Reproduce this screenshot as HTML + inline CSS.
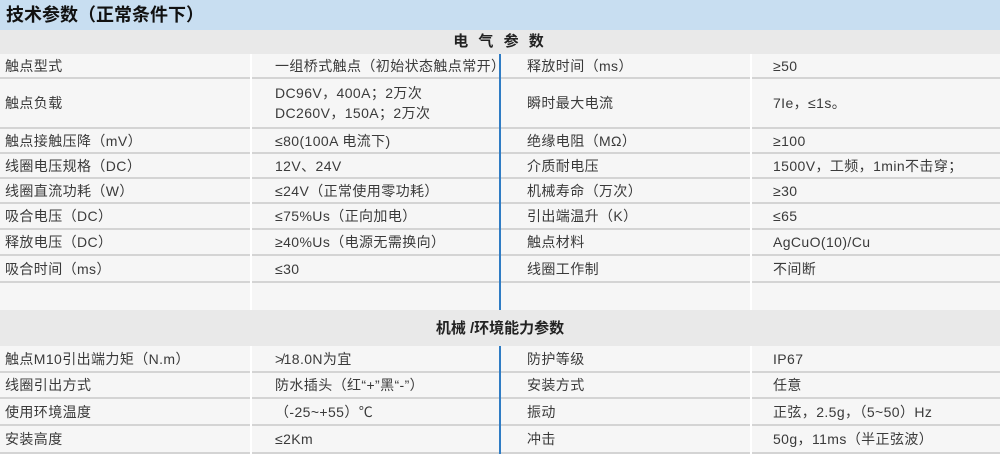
<!DOCTYPE html>
<html><head><meta charset="utf-8"><style>
*{margin:0;padding:0;box-sizing:border-box}
body{width:1000px;height:454px;background:#f6f6f6;font-family:"Liberation Sans","Noto Sans CJK SC",sans-serif;color:#3a3a3a;font-size:14px;position:relative;overflow:hidden}
.title{position:absolute;left:0;top:0;width:1000px;height:30px;background:#c8def1;font-weight:bold;font-size:18px;color:#111;padding-left:6px;line-height:30px}
.sec{position:absolute;left:0;width:1000px;background:#e9e9e9;text-align:center;font-size:15px;color:#222}
.row{position:absolute;left:0;width:1000px;border-bottom:2px solid #d4d4d4;background:#f6f6f6}
.row div{position:absolute;top:0;height:100%;display:flex;align-items:center;line-height:20px;letter-spacing:0.4px}
.c1{left:5px}.c2{left:275px}.c3{left:527px}.c4{left:773px}
.vs{position:absolute;left:250px;width:2px;background:#fff}
.vs2{position:absolute;left:750px;width:2px;background:#fff}
.blue{position:absolute;left:499px;width:2px;background:#2f7cc4}
</style></head><body>
<div class="title">技术参数（正常条件下）</div>
<div class="sec" style="top:30px;height:24px;line-height:24px;font-weight:bold;letter-spacing:3px">电 气 参 数</div>

<div class="row" style="top:54px;height:25px"><div class="c1">触点型式</div><div class="c2">一组桥式触点（初始状态触点常开）</div><div class="c3">释放时间（ms）</div><div class="c4">≥50</div></div>
<div class="row" style="top:79px;height:50px"><div class="c1">触点负载</div><div class="c2">DC96V，400A；2万次<br>DC260V，150A；2万次</div><div class="c3">瞬时最大电流</div><div class="c4">7Ie，≤1s。</div></div>
<div class="row" style="top:129px;height:25px"><div class="c1">触点接触压降（mV）</div><div class="c2">≤80(100A 电流下)</div><div class="c3">绝缘电阻（MΩ）</div><div class="c4">≥100</div></div>
<div class="row" style="top:154px;height:25px"><div class="c1">线圈电压规格（DC）</div><div class="c2">12V、24V</div><div class="c3">介质耐电压</div><div class="c4">1500V，工频，1min不击穿；</div></div>
<div class="row" style="top:179px;height:25px"><div class="c1">线圈直流功耗（W）</div><div class="c2">≤24V（正常使用零功耗）</div><div class="c3">机械寿命（万次）</div><div class="c4">≥30</div></div>
<div class="row" style="top:204px;height:26px"><div class="c1">吸合电压（DC）</div><div class="c2">≤75%Us（正向加电）</div><div class="c3">引出端温升（K）</div><div class="c4">≤65</div></div>
<div class="row" style="top:230px;height:26px"><div class="c1">释放电压（DC）</div><div class="c2">≥40%Us（电源无需换向）</div><div class="c3">触点材料</div><div class="c4">AgCuO(10)/Cu</div></div>
<div class="row" style="top:256px;height:27px"><div class="c1">吸合时间（ms）</div><div class="c2">≤30</div><div class="c3">线圈工作制</div><div class="c4">不间断</div></div>
<div class="row" style="top:283px;height:27px;border-bottom:none"></div>
<div class="vs" style="top:54px;height:256px"></div><div class="vs2" style="top:54px;height:256px"></div>
<div class="blue" style="top:54px;height:256px"></div>

<div class="sec" style="top:310px;height:36px;line-height:38px;font-weight:bold">机械 /环境能力参数</div>
<div class="row" style="top:346px;height:27px"><div class="c1">触点M10引出端力矩（N.m）</div><div class="c2">≯18.0N为宜</div><div class="c3">防护等级</div><div class="c4">IP67</div></div>
<div class="row" style="top:373px;height:26px"><div class="c1">线圈引出方式</div><div class="c2">防水插头（红“+”黑“-”）</div><div class="c3">安装方式</div><div class="c4">任意</div></div>
<div class="row" style="top:399px;height:27px"><div class="c1">使用环境温度</div><div class="c2">（-25~+55）℃</div><div class="c3">振动</div><div class="c4">正弦，2.5g，（5~50）Hz</div></div>
<div class="row" style="top:426px;height:28px"><div class="c1">安装高度</div><div class="c2">≤2Km</div><div class="c3">冲击</div><div class="c4">50g，11ms（半正弦波）</div></div>
<div class="vs" style="top:346px;height:108px"></div><div class="vs2" style="top:346px;height:108px"></div>
<div class="blue" style="top:346px;height:108px"></div>
</body></html>
